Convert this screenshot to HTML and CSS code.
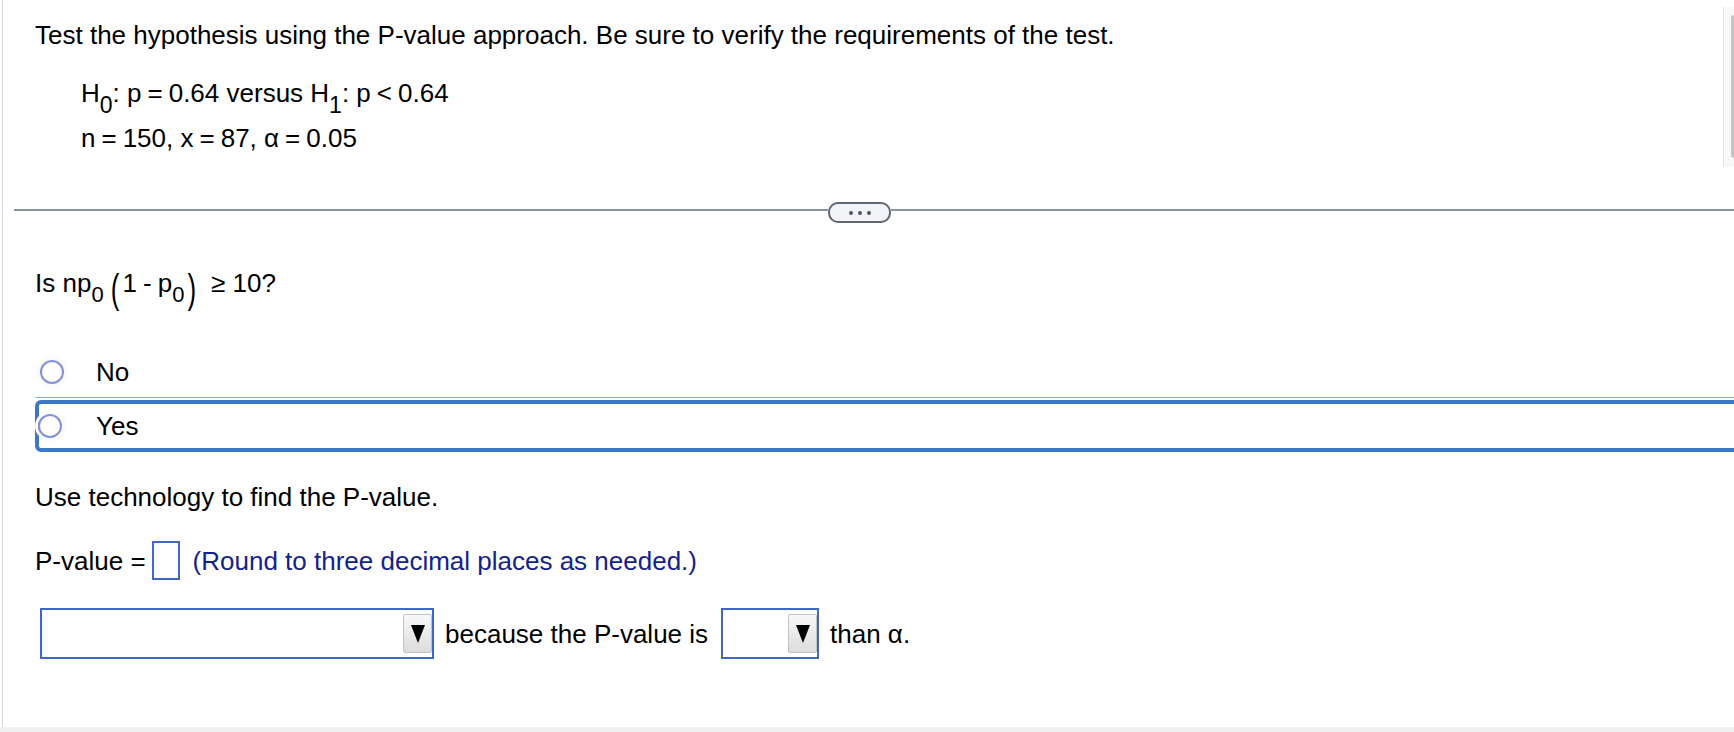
FILE: index.html
```html
<!DOCTYPE html>
<html lang="en">
<head>
<meta charset="utf-8">
<title>Hypothesis test</title>
<link rel="stylesheet" href="styles.css">
</head>
<body>
<div class="page">
  <div class="top-panel">
    <div class="top-content">
      <p class="line">Test the hypothesis using the P-value approach. Be sure to verify the requirements of the test.</p>
      <div class="math">
        <div class="line">H<sub>0</sub>: p<span class="op">=</span>0.64 versus H<sub>1</sub>: p<span class="op">&lt;</span>0.64</div>
        <div class="line">n<span class="op">=</span>150, x<span class="op">=</span>87, α<span class="op">=</span>0.05</div>
      </div>
    </div>
    <div class="scroll-track"><div class="scroll-thumb"></div></div>
  </div>

  <div class="divider">
    <span class="rule left"></span>
    <span class="more"><i></i><i></i><i></i></span>
    <span class="rule"></span>
  </div>

  <div class="line question">Is np<sub class="qsub">0</sub> <span class="paren">(</span>1<span class="minus">-</span>p<sub class="qsub">0</sub><span class="paren close">)</span>≥ 10?</div>

  <div class="options">
    <div class="option"><span class="radio"></span><span class="line">No</span></div>
    <div class="sep"></div>
    <div class="option selected"><span class="radio"></span><span class="line">Yes</span></div>
  </div>

  <p class="line tech">Use technology to find the P-value.</p>

  <div class="pvalue">
    <span class="line">P-value =</span>
    <span class="answer-box"></span>
    <span class="line hint">(Round to three decimal places as needed.)</span>
  </div>

  <div class="conclusion">
    <span class="select wide"><span class="arrow"><svg width="14" height="18" viewBox="0 0 14 18"><polygon points="0,0 14,0 7,18" fill="#000"/></svg></span></span>
    <span class="line txt1">because the P-value is</span>
    <span class="select narrow"><span class="arrow"><svg width="14" height="18" viewBox="0 0 14 18"><polygon points="0,0 14,0 7,18" fill="#000"/></svg></span></span>
    <span class="line txt2">than α.</span>
  </div>
</div>
<div class="strip"></div>
</body>
</html>
```
FILE: styles.css
```css
* { box-sizing: border-box; }
html, body { margin: 0; padding: 0; }
body {
  width: 1734px;
  height: 732px;
  overflow: hidden;
  background: #fff;
  font-family: "Liberation Sans", Arial, sans-serif;
  font-size: 26px;
  color: #000;
  display: flex;
  flex-direction: column;
}
.page {
  height: 727px;
  margin-left: 2px;
  border-left: 1px solid #d3d8e2;
  padding-left: 32px;
  display: flex;
  flex-direction: column;
}
.strip { height: 5px; background: #f0f0f0; }

.line { line-height: 30px; height: 30px; margin: 0; white-space: nowrap; display: block; }

sub { font-size: 23px; line-height: 0; vertical-align: -11px; }
.qsub { font-size: 22px; vertical-align: -10px; }
.op { margin: 0 6px; }

.top-panel { display: flex; height: 167px; }
.top-content { flex: 1; padding-top: 20px; }
.math { padding-left: 46px; margin-top: 28px; }
.math .line + .line { margin-top: 15px; }
.scroll-track {
  width: 11px;
  height: 160px;
  margin-top: 7px;
  border-left: 1px solid #e4e4e4;
  background: #f8f8f8;
  padding: 8px 0 9px 7px;
}
.scroll-thumb { height: 100%; background: #c4c4c4; border-radius: 4px 0 0 4px; }

.divider {
  display: flex;
  align-items: flex-start;
  margin: 35px 0 0 -21px;
  height: 21px;
}
.rule { height: 2px; background: #8a93a4; flex: 1; margin-top: 7px; }
.rule.left { flex: 0 0 814px; }
.more {
  width: 63px;
  height: 21px;
  border: 2px solid #5c6777;
  border-radius: 10px;
  background: #f3f4f7;
  display: flex;
  align-items: center;
  justify-content: center;
  gap: 5px;
}
.more i { width: 4px; height: 4px; border-radius: 50%; background: #4d5563; }

.question { margin-top: 45px; }
.paren { display: inline-block; transform: translateY(6px) scaleY(1.55); margin: 0 3px 0 0; }
.paren.close { margin: 0 15px 0 3px; }
.minus { margin: 0 6px; }

.options { margin-top: 52px; }
.option { display: flex; align-items: center; height: 44px; padding-left: 5px; }
.radio {
  flex: 0 0 24px;
  width: 24px;
  height: 24px;
  border-radius: 50%;
  border: 2px solid #8391da;
  box-shadow: 0 0 0 3px #fbfbfb, 0 0 4px 3px rgba(0, 0, 0, 0.05);
  margin-right: 32px;
}
.sep { height: 1px; background: #8aaee0; margin: 3px -10px 0 0; border-radius: 1px 0 0 0; }
.option.selected {
  height: 52px;
  margin: 2px -10px 0 0;
  padding-left: 0;
  border: 4px solid #3b79c8;
  border-radius: 6px;
}
.option.selected .radio { margin-left: -1px; margin-right: 34px; }

.tech { margin-top: 30px; }

.pvalue { display: flex; align-items: center; height: 39px; margin-top: 29px; }
.answer-box { width: 28px; height: 39px; border: 2px solid #4068c8; margin-left: 6px; }
.hint { color: #14228a; margin-left: 13px; }

.conclusion { display: flex; align-items: center; height: 51px; margin-top: 28px; }
.select {
  height: 51px;
  border: 2px solid #4066c6;
  display: flex;
  justify-content: flex-end;
  padding: 4px 0;
}
.select.wide { width: 394px; margin-left: 5px; }
.select.narrow { width: 98px; margin-left: 13px; }
.arrow {
  width: 29px;
  height: 39px;
  border: 1px solid #c2c2c2;
  border-radius: 2px;
  background: linear-gradient(#f8f8f8, #dcdcdc);
  display: flex;
  align-items: center;
  justify-content: center;
}
.txt1 { margin-left: 11px; }
.txt2 { margin-left: 11px; }
```
